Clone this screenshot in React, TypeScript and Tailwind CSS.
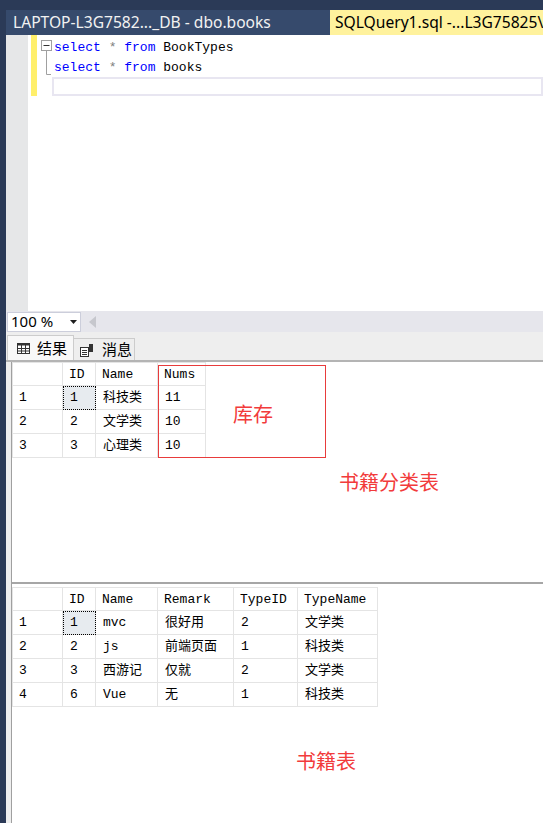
import type { ReactNode } from 'react';

type Col = { w: string; label: string };

const mono = "font-['Liberation_Mono','Noto_Sans_CJK_SC',monospace]";

const typeCols: Col[] = [
  { w: 'w-[50px]', label: '' },
  { w: 'w-[33px]', label: 'ID' },
  { w: 'w-[62px]', label: 'Name' },
  { w: 'w-[48px]', label: 'Nums' },
];

const typeRows = [
  ['1', '1', '科技类', '11'],
  ['2', '2', '文学类', '10'],
  ['3', '3', '心理类', '10'],
];

const bookCols: Col[] = [
  { w: 'w-[50px]', label: '' },
  { w: 'w-[33px]', label: 'ID' },
  { w: 'w-[62px]', label: 'Name' },
  { w: 'w-[76px]', label: 'Remark' },
  { w: 'w-[64px]', label: 'TypeID' },
  { w: 'w-[80px]', label: 'TypeName' },
];

const bookRows = [
  ['1', '1', 'mvc', '很好用', '2', '文学类'],
  ['2', '2', 'js', '前端页面', '1', '科技类'],
  ['3', '3', '西游记', '仅就', '2', '文学类'],
  ['4', '6', 'Vue', '无', '1', '科技类'],
];

function Grid({ cols, rows }: { cols: Col[]; rows: string[][] }) {
  return (
    <div className={`flex w-fit flex-col border-t border-l border-[#e4e4e4] text-[13px] text-black ${mono}`}>
      <div className="flex h-[23px]">
        {cols.map((c, i) => (
          <div key={i} className={`${c.w} flex items-center border-r border-b border-[#e4e4e4] pt-[1px] pl-[6px]`}>
            {c.label}
          </div>
        ))}
      </div>
      {rows.map((r, ri) => (
        <div key={ri} className="flex h-[24px]">
          {r.map((v, ci) => (
            <div
              key={ci}
              className={`${cols[ci].w} flex items-center border-r border-b border-[#e4e4e4] ${
                ci === 0 ? 'pl-[6px]' : 'pl-[7px]'
              } ${ri === 0 && ci === 1 ? 'bg-[#e7ebef] outline outline-1 outline-dotted outline-black -outline-offset-1' : ''}`}
            >
              {v}
            </div>
          ))}
        </div>
      ))}
    </div>
  );
}

function Kw({ children }: { children: ReactNode }) {
  return <span className="text-[#0000ff]">{children}</span>;
}

function Star() {
  return <span className="text-[#808080]">*</span>;
}

function Note({ children, className }: { children: ReactNode; className: string }) {
  return (
    <div className={`absolute text-[20px] leading-[20px] text-[#f23b3b] font-['Noto_Sans_CJK_SC',sans-serif] ${className}`}>
      {children}
    </div>
  );
}

export default function App() {
  return (
    <div className="flex h-[823px] w-[543px] flex-col overflow-hidden bg-[#2b3a57] pt-[10px] pl-[6px] font-['Noto_Sans','Noto_Sans_CJK_SC',sans-serif]">
      {/* document tabs */}
      <div className="flex h-[25px] shrink-0 whitespace-nowrap text-[15.6px]">
        <div className="flex w-[324px] items-center bg-[#364a6c] pl-[7px] text-[#f2f2f2]">
          LAPTOP-L3G7582..._DB - dbo.books
        </div>
        <div className="flex flex-1 items-center overflow-hidden bg-[#fff29d] pl-[5px] text-black">
          SQLQuery1.sql -...L3G75825\
        </div>
      </div>

      {/* editor */}
      <div className="flex h-[276px] shrink-0 bg-white">
        <div className="w-[22px] bg-[#e6e7e8]" />
        <div className="w-[3px]" />
        <div className="h-[61px] w-[6px] bg-[#ffef6b]" />
        <svg width="15" height="60" className="shrink-0">
          <rect x="4.5" y="5.5" width="10" height="10" fill="white" stroke="#a0a0a0" />
          <line x1="6.5" y1="10.5" x2="12.5" y2="10.5" stroke="#333" />
          <line x1="9.5" y1="15.5" x2="9.5" y2="39.5" stroke="#a0a0a0" />
          <line x1="9.5" y1="39.5" x2="14" y2="39.5" stroke="#a0a0a0" />
        </svg>
        <div className={`flex flex-1 flex-col pt-[3px] text-[13px] whitespace-pre text-black ${mono}`}>
          <div className="h-[20px] pl-[2px] leading-[20px]">
            <Kw>select</Kw> <Star /> <Kw>from</Kw> BookTypes
          </div>
          <div className="h-[20px] pl-[2px] leading-[20px]">
            <Kw>select</Kw> <Star /> <Kw>from</Kw> books
          </div>
          <div className="-mt-[1px] h-[19px] border-2 border-[#e8e6f1]" />
        </div>
      </div>

      {/* zoom bar */}
      <div className="flex h-[21px] shrink-0 items-center bg-[#e6e6ec]">
        <div className="ml-[1px] flex h-[20px] w-[74px] items-center justify-between border border-[#cccedb] bg-white pr-[3px] pl-[3px] text-[15px] text-black">
          <span>100 %</span>
          <svg width="7" height="4">
            <path d="M0 0h7L3.5 4z" fill="#1e1e1e" />
          </svg>
        </div>
        <svg width="8" height="12" className="ml-[8px]">
          <path d="M7 0v12L0 6z" fill="#c6c7cd" />
        </svg>
      </div>

      {/* result tabs */}
      <div className="flex h-[28px] shrink-0 items-end bg-[#eeeeee] pl-[1px] text-[15px] text-black">
        <div className="flex h-[25px] w-[67px] items-center gap-[7px] border border-b-0 border-[#cccccc] bg-[#f8f8f8] pl-[9px]">
          <svg width="13" height="11" className="shrink-0">
            <rect x="0.5" y="0.5" width="12" height="10" fill="white" stroke="#333" />
            <rect x="0.5" y="0.5" width="12" height="2" fill="#333" />
            <line x1="0" y1="5.5" x2="13" y2="5.5" stroke="#333" />
            <line x1="0" y1="8" x2="13" y2="8" stroke="#333" />
            <line x1="4.5" y1="0" x2="4.5" y2="11" stroke="#333" />
            <line x1="8.5" y1="0" x2="8.5" y2="11" stroke="#333" />
          </svg>
          <span>结果</span>
        </div>
        <div className="flex h-[22px] w-[61px] items-center gap-[8px] border border-b-0 border-l-0 border-[#cccccc] pl-[6px]">
          <svg width="14" height="14" className="shrink-0">
            <rect x="0.5" y="4.5" width="8" height="9" fill="white" stroke="#333" />
            <line x1="2" y1="7.5" x2="7" y2="7.5" stroke="#333" />
            <line x1="2" y1="9.5" x2="7" y2="9.5" stroke="#333" />
            <line x1="2" y1="11.5" x2="7" y2="11.5" stroke="#333" />
            <rect x="9" y="1" width="4" height="8" fill="#333" />
          </svg>
          <span>消息</span>
        </div>
      </div>

      {/* results */}
      <div className="flex flex-1 flex-col border-t-2 border-[#b4b4b4] bg-[#eeeeee] pl-[5px]">
        <div className="flex flex-1 flex-col border-l border-[#a0a0a0] bg-white">
          <div className="relative h-[222px] shrink-0 border-b-2 border-[#a6a6a6]">
            <Grid cols={typeCols} rows={typeRows} />
            <div className="absolute top-[3px] left-[146px] h-[93px] w-[168px] border border-[#e83b3b]" />
            <Note className="top-[42px] left-[221px]">库存</Note>
            <Note className="top-[110px] left-[327px]">书籍分类表</Note>
          </div>
          <div className="relative flex-1 pt-[3px]">
            <Grid cols={bookCols} rows={bookRows} />
            <Note className="top-[167px] left-[284px]">书籍表</Note>
          </div>
        </div>
      </div>
    </div>
  );
}
